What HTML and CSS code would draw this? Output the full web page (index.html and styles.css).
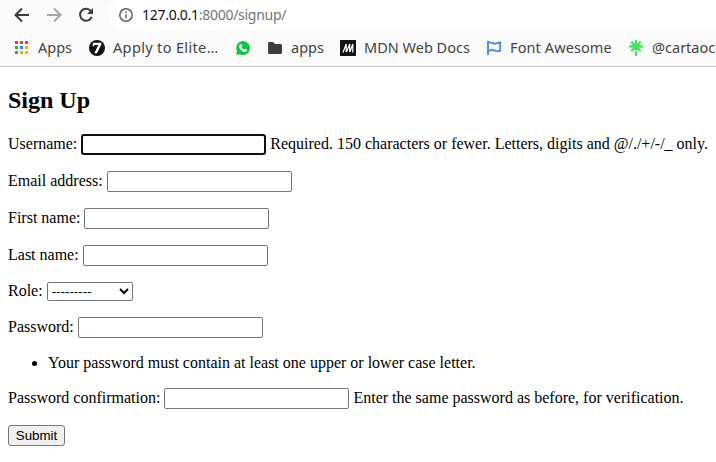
FILE: index.html
```html
<!DOCTYPE html>
<html lang="en">
<head>
<meta charset="utf-8">
<title>Sign Up</title>
<link rel="stylesheet" href="styles.css">
</head>
<body>
<header class="browser">
  <div class="toolbar">
    <svg class="nav" viewBox="0 0 16 16"><path d="M15 8H2M8 1.5L1.5 8L8 14.500"/></svg>
    <svg class="nav disabled" viewBox="0 0 16 16"><path d="M1 8h13M8 1.500L14.500 8L8 14.500"/></svg>
    <svg class="nav" viewBox="0 0 16 16"><path d="M12.800 4A6 6 0 1 0 13.700 9.800"/><path class="solid" d="M15 1v6H9z"/></svg>
    <div class="address">
      <svg class="info" viewBox="0 0 14 14"><circle cx="7" cy="7" r="6.200"/><path d="M7 6.300v4M7 3.500v1.500"/></svg>
      <span class="url"><b>127.0.0.1</b>:8000/signup/</span>
    </div>
  </div>
  <nav class="bookmarks">
    <a class="bookmark apps-grid">
      <svg viewBox="0 0 16 16"><g fill="#ea4335"><path d="M1 1h3v3H1zM6 1h3v3H6zM11 1h3v3h-3z"/></g><path fill="#34a853" d="M1 6h3v3H1zM1 11h3v3H1z"/><path fill="#1a87f5" d="M6 6h3v3H6z"/><path fill="#fbad05" d="M11 6h3v3h-3zM6 11h3v3H6zM11 11h3v3h-3z"/></svg>
      <span>Apps</span>
    </a>
    <a class="bookmark apply">
      <svg viewBox="0 0 16 16"><circle cx="8" cy="8" r="8" fill="#111"/><path fill="#fff" d="M4 2.800h8.500l-.3 1.900L8 13.200H5.300L9.300 5H5.500l-.6 1.300H3.500z"/></svg>
      <span>Apply to Elite…</span>
    </a>
    <a class="bookmark whatsapp">
      <svg viewBox="0 0 16 16"><path fill="#12c443" d="M8 1a7 7 0 1 1-3.300 13.200L1 15l1-3.700A7 7 0 0 1 8 1z"/><path fill="#fff" d="M5 4.300l1.200-.2.900 2-.8 1c.6 1.300 1.400 2 2.700 2.600l1-.9 2 1c0 1.500-1 2.200-2.300 2.100C6.800 11.500 4 8.600 4 6.200c0-.8.400-1.500 1-1.900z"/></svg>
    </a>
    <a class="bookmark folder">
      <svg viewBox="0 0 16 16"><path fill="#3c3c3c" d="M2.500 2H6l2 2h5.500c.8 0 1.500.600 1.500 1.500v7c0 .8-.7 1.500-1.500 1.500h-11C1.700 14 1 13.300 1 12.500v-9C1 2.700 1.700 2 2.500 2z"/></svg>
      <span>apps</span>
    </a>
    <a class="bookmark mdn">
      <svg viewBox="0 0 16 16"><path fill="#15141a" d="M0 0h16v16H0z"/><path fill="none" stroke="#fff" stroke-width="1.200" d="M3 12.500L6.200 4v8M6.500 12L9.700 4v8M9.900 12L12.800 4v8.500"/></svg>
      <span>MDN Web Docs</span>
    </a>
    <a class="bookmark awesome">
      <svg viewBox="0 0 16 16"><path fill="none" stroke="#4c8cdb" stroke-width="1.900" d="M2 1v14M2 2.700c4-1.400 5 1.800 8 .7l4.200-1v8.300c-4 1.800-5.200-1-8-.7L2 11"/></svg>
      <span>Font Awesome</span>
    </a>
    <a class="bookmark linktree">
      <svg viewBox="0 0 16 16"><path fill="none" stroke="#43e660" stroke-width="2.400" d="M8 0v10M1 6.500h14M3.200 1.800L8 6.500l4.800-4.700M3.200 11.200L8 6.500l4.800 4.700M8 11v5"/></svg>
      <span>@cartaocorp</span>
    </a>
  </nav>
</header>
<main>
  <h2>Sign Up</h2>
  <form>
    <p><label for="username">Username:</label> <input class="field focused" id="username" type="text"> <span>Required. 150 characters or fewer. Letters, digits and @/./+/-/_ only.</span></p>
    <p><label for="email">Email address:</label> <input class="field" id="email" type="email"></p>
    <p><label for="first">First name:</label> <input class="field" id="first" type="text"></p>
    <p><label for="last">Last name:</label> <input class="field" id="last" type="text"></p>
    <p class="role"><label for="role">Role:</label> <select id="role"><option>---------</option></select></p>
    <p><label for="password">Password:</label> <input class="field" id="password" type="password"></p>
    <ul><li>Your password must contain at least one upper or lower case letter.</li></ul>
    <p><label for="confirm">Password confirmation:</label> <input class="field" id="confirm" type="password"> <span>Enter the same password as before, for verification.</span></p>
    <button type="submit">Submit</button>
  </form>
</main>
</body>
</html>
```
FILE: styles.css
```css
body {
  margin: 0;
  height: 462px;
  overflow: hidden;
  background: #fff;
  color: #000;
  font: 16px/18px "Liberation Serif", serif;
}

.browser {
  box-sizing: border-box;
  height: 67px;
  overflow: hidden;
  border-bottom: 1px solid #c4c4c4;
  background: #fafafa;
  color: #444;
  font-family: "Noto Sans", sans-serif;
}

.toolbar {
  display: flex;
  align-items: center;
  height: 30px;
  padding-left: 14px;
  gap: 16px;
}

.nav {
  flex: none;
  width: 16px;
  height: 16px;
  fill: none;
  stroke: #3c3c3c;
  stroke-width: 2;
}

.disabled { stroke: #a6a6a6; }

.solid {
  fill: #3c3c3c;
  stroke: none;
}

.address {
  display: flex;
  align-items: center;
  flex: 1;
  height: 30px;
  margin-left: -2px;
  padding-left: 11px;
  gap: 9px;
  border-radius: 12px 0 0 15px;
  background: #fff;
}

.info {
  width: 14px;
  height: 14px;
  fill: none;
  stroke: #5f6368;
  stroke-width: 1.5;
}

.url {
  color: #757575;
  font-size: 14px;
  letter-spacing: -0.28px;
}

.url b {
  color: #111;
  font-weight: 400;
}

.bookmarks {
  display: flex;
  height: 36px;
  font-size: 14.5px;
  white-space: nowrap;
}

.bookmark {
  display: flex;
  flex: none;
  align-items: center;
  gap: 8px;
}

.bookmark span { padding-bottom: 2px; }

.bookmark svg {
  flex: none;
  width: 16px;
  height: 16px;
}

.apps-grid { width: 75px; padding-left: 14px; }
.apply { width: 146px; letter-spacing: 0.35px; }
.whatsapp { width: 32px; }
.folder { width: 73px; }
.mdn { width: 146px; }
.awesome { width: 142px; letter-spacing: 0.1px; }

main { padding: 0 8px; }

h2 {
  margin: 20px 0;
  font-size: 24px;
  line-height: 27px;
}

p {
  display: flex;
  align-items: center;
  gap: 4px;
  height: 21px;
  margin: 0 0 16px;
  white-space: nowrap;
}

p label,
p span {
  padding-bottom: 2px;
}

.field {
  box-sizing: border-box;
  width: 185px;
  height: 21px;
  margin: 0;
  border: 1px solid #767676;
  border-radius: 2px;
  background: #fff;
}

.focused {
  border: 2px solid #101010;
  border-radius: 3px;
}

.role { height: 19px; }

select {
  box-sizing: border-box;
  width: 86px;
  height: 19px;
  margin: 0;
  border: 1px solid #767676;
  border-radius: 2px;
  background-color: #fff;
  color: #000;
  font: 13.333px "Liberation Sans", sans-serif;
}

ul {
  margin: 0 0 16px;
  padding-left: 40px;
}

button {
  display: block;
  box-sizing: border-box;
  width: 57px;
  height: 21px;
  padding: 0;
  border: 1px solid #767676;
  border-radius: 3px;
  background: #efefef;
  color: #000;
  font: 13.333px "Liberation Sans", sans-serif;
}
```
